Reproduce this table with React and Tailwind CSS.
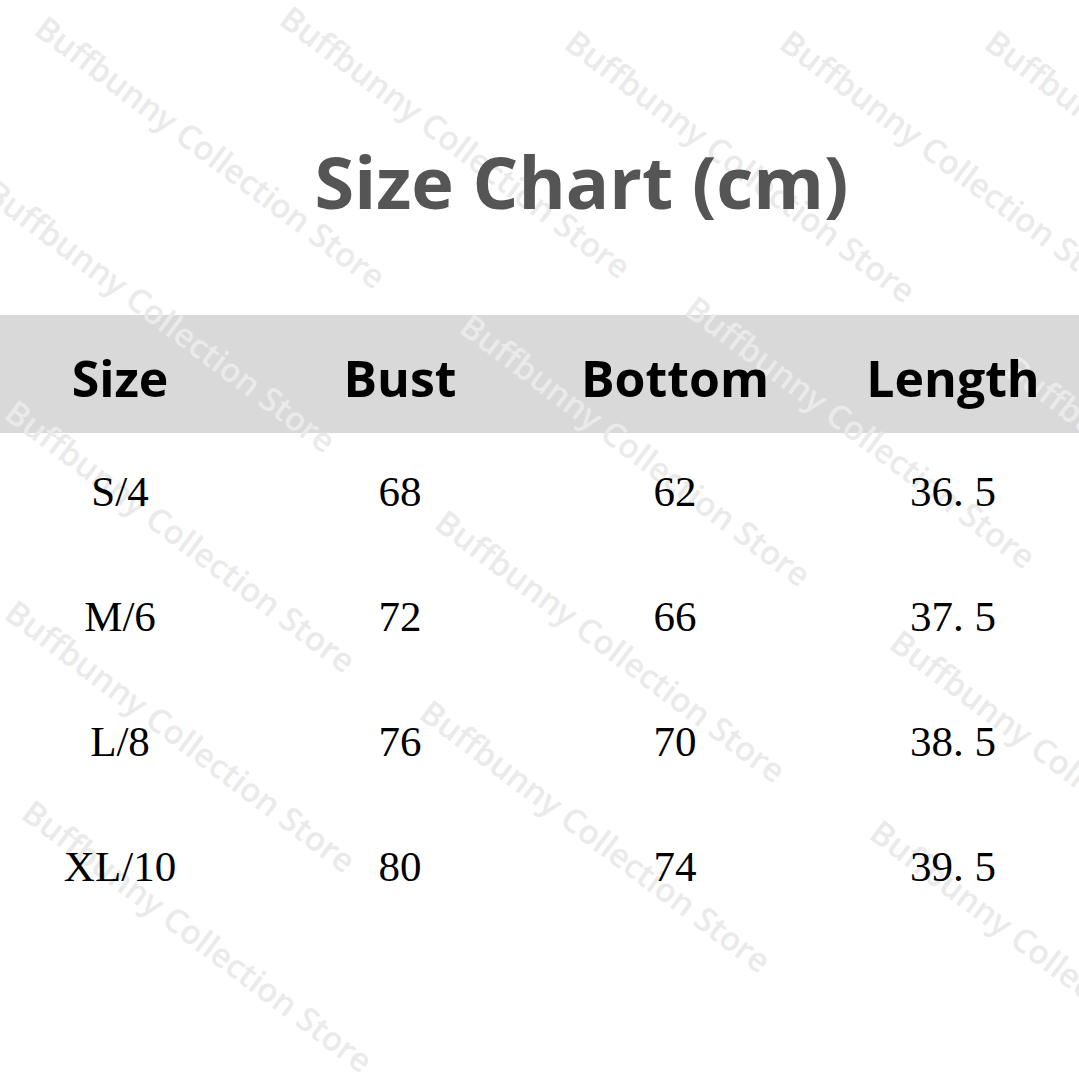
import React from "react";

const cols = ["ml-[20px]", "ml-[80px]", "ml-[75px]", "ml-[78px]"];

const headers = ["Size", "Bust", "Bottom", "Length"];

const rows = [
  ["S/4", "68", "62", "36. 5"],
  ["M/6", "72", "66", "37. 5"],
  ["L/8", "76", "70", "38. 5"],
  ["XL/10", "80", "74", "39. 5"],
];

// where each "Buffbunny Collection Store" stamp starts
const marks = [
  [50, 10], [295, 0], [580, 24], [795, 24], [1000, 24],
  [0, 174], [475, 308], [700, 290], [1020, 350],
  [20, 394], [450, 504], [20, 594], [905, 624], [435, 694],
  [37, 794], [885, 814],
];

function Watermark({ x, y }) {
  return (
    <div
      className="absolute origin-top-left rotate-[37deg] whitespace-nowrap text-[33px] font-semibold leading-none text-[#eaeaea] font-['Open_Sans',sans-serif]"
      style={{ left: x, top: y }}
    >
      Buffbunny Collection Store
    </div>
  );
}

export default function App() {
  return (
    <div className="relative w-[1079px] h-[1079px] overflow-hidden bg-white">
      <div className="h-[315px] pt-[145px] pl-[84px] flex justify-center">
        <h1 className="relative z-10 text-[72px] leading-none font-bold text-[#555555] font-['Open_Sans',sans-serif]">
          Size Chart (cm)
        </h1>
      </div>

      <div className="h-[118px] pt-2 bg-[#d9d9d9] flex items-center">
        {headers.map((h, i) => (
          <div
            key={h}
            className={`${cols[i]} relative z-10 w-[200px] text-center text-[50px] leading-none font-bold text-black font-['Open_Sans',sans-serif]`}
          >
            {h}
          </div>
        ))}
      </div>

      <div>
        {rows.map((row) => (
          <div key={row[0]} className="h-[125px] pb-2 flex items-center">
            {row.map((cell, i) => (
              <div
                key={i}
                className={`${cols[i]} relative z-10 w-[200px] text-center text-[43px] leading-none text-black font-['Liberation_Serif',serif]`}
              >
                {cell}
              </div>
            ))}
          </div>
        ))}
      </div>

      <div className="absolute inset-0 pointer-events-none">
        {marks.map(([x, y]) => (
          <Watermark key={`${x}-${y}`} x={x} y={y} />
        ))}
      </div>
    </div>
  );
}
